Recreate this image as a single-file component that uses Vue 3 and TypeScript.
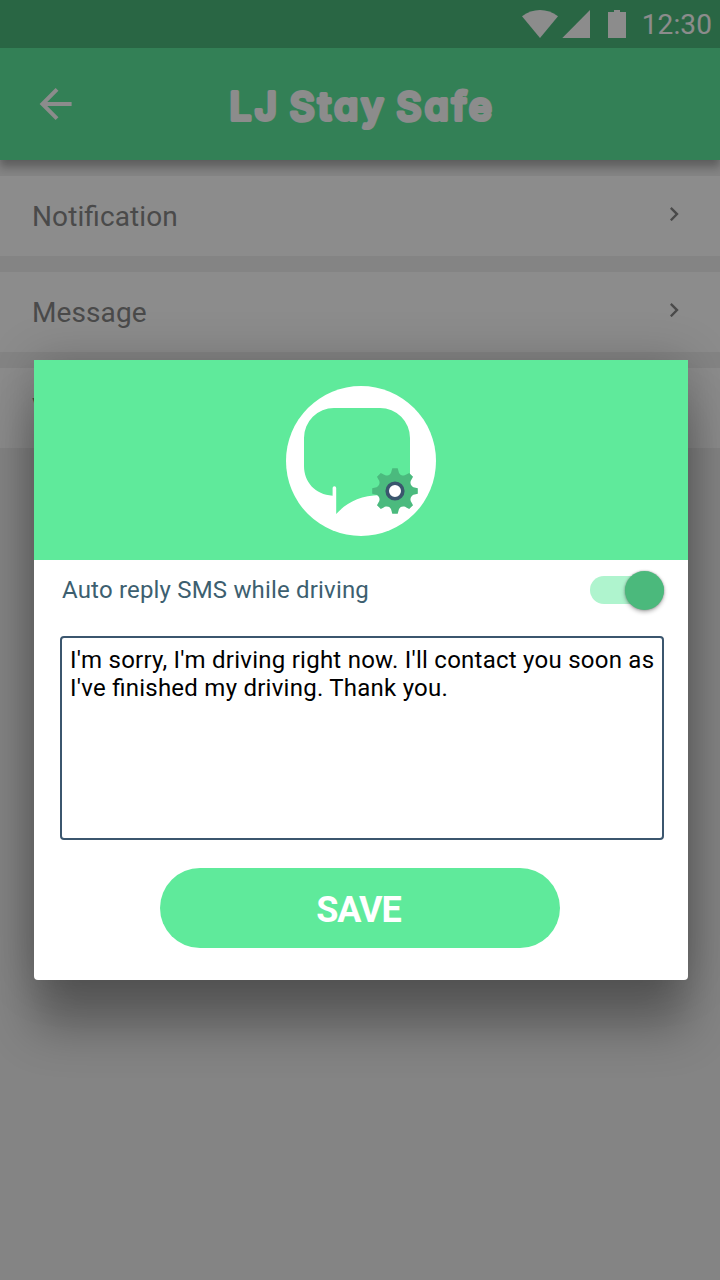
<script setup lang="ts">
import { ref } from 'vue'

const rows = ref<string[]>(['Notification', 'Message', 'V'])
const autoReply = ref(true)
const message = ref("I'm sorry, I'm driving right now. I'll contact you soon as I've finished my driving. Thank you.")

// Eight-toothed gear centred on (cx, cy)
function gearPath(cx: number, cy: number): string {
  const teeth = 8
  const at = (angle: number, along: number, across: number) => {
    const x = cx + Math.cos(angle) * along - Math.sin(angle) * across
    const y = cy + Math.sin(angle) * along + Math.cos(angle) * across
    return `${x.toFixed(2)} ${y.toFixed(2)}`
  }
  let d = ''
  for (let i = 0; i < teeth; i++) {
    const a = (i * Math.PI * 2) / teeth
    const next = ((i + 1) * Math.PI * 2) / teeth
    d += `${i === 0 ? 'M' : 'L'}${at(a, 19.6, -3.6)}L${at(a, 22.8, -2.7)}L${at(a, 22.8, 2.7)}L${at(a, 19.6, 3.6)}`
    d += `A4.9 4.9 0 0 0 ${at(next, 19.6, -3.6)}`
  }
  return d + 'Z'
}
const gear = gearPath(109, 105)
</script>

<template>
  <div class="screen">
    <div class="top">
      <div class="status">
        <svg class="signals" width="104" height="28" viewBox="0 0 104 28">
          <path d="M0 6.2C11-2 25-2 36 6.2L18 28Z" />
          <path d="M68 0V28H40.3Z" />
          <path d="M92 0h6v2h6v26H86V2h6Z" />
        </svg>
        <span class="clock">12:30</span>
      </div>
      <header class="bar">
        <svg class="back" width="48" height="48" viewBox="0.2 0 24 24">
          <path d="M20 11H7.83l5.59-5.59L12 4l-8 8 8 8 1.41-1.41L7.83 13H20z" />
        </svg>
        <svg class="title" width="280" height="64" viewBox="0 0 280 64">
          <text x="9.500" y="47.500" textLength="262" lengthAdjust="spacing">LJ Stay Safe</text>
        </svg>
      </header>
    </div>
    <main class="list">
      <div v-for="row in rows" :key="row" class="row">
        <span>{{ row }}</span>
        <svg width="10" height="14" viewBox="0 0 10 14"><path d="M.8 .9L7 7.100L.8 13.300" /></svg>
      </div>
    </main>
    <div class="overlay">
      <section class="dialog">
        <div class="hero">
          <svg width="150" height="150" viewBox="0 0 150 150">
            <circle cx="75" cy="75" r="75" fill="#fff" />
            <path d="M48 22H94A30 30 0 0 1 124 52V109H94C74 109.500 60 117 50.200 128V102A1.800 1.800 0 0 0 46.600 102V109.700C29 108.500 18 96 18 80V52A30 30 0 0 1 48 22Z" fill="#5fea9b" />
            <path :d="gear" fill="#4bba7e" />
            <circle cx="109" cy="105" r="7.800" fill="#fff" stroke="#3b566e" stroke-width="3.600" />
          </svg>
        </div>
        <div class="body">
          <div class="option">
            <span>Auto reply SMS while driving</span>
            <button class="switch" :class="{ on: autoReply }" role="switch" :aria-checked="autoReply" aria-label="Auto reply" @click="autoReply = !autoReply">
              <span class="thumb"></span>
            </button>
          </div>
          <textarea v-model="message" class="message" spellcheck="false"></textarea>
          <button class="save">SAVE</button>
        </div>
      </section>
    </div>
  </div>
</template>

<style>
body {
  margin: 0;
}
</style>

<style scoped>
.screen {
  position: relative;
  width: 720px;
  height: 1280px;
  overflow: hidden;
  background: #f0f0f0;
  font-family: Roboto, "Liberation Sans", sans-serif;
}
.top {
  height: 160px;
  background: #5eea9d;
  box-shadow: 0 0 8px rgba(0, 0, 0, 0.12), 0 8px 8px rgba(0, 0, 0, 0.24);
}
.status {
  display: flex;
  justify-content: flex-end;
  align-items: center;
  gap: 15px;
  height: 48px;
  padding-right: 8px;
  box-sizing: border-box;
  background: rgba(0, 0, 0, 0.2);
  color: #fff;
}
.signals {
  fill: #fff;
}
.clock {
  width: 71px;
  padding-top: 2px;
  text-align: right;
  font-size: 28px;
  line-height: 48px;
  letter-spacing: 0.1px;
}
.bar {
  display: grid;
  grid-template-columns: 48px 280px 48px;
  justify-content: space-between;
  align-items: center;
  height: 112px;
  padding: 0 32px;
}
.back {
  fill: #fff;
}
.title text {
  font-family: Inter, sans-serif;
  font-size: 38.5px;
  font-weight: 500;
  font-feature-settings: "cv11";
  word-spacing: -4px;
  fill: #fff;
  stroke: #fff;
  stroke-width: 4px;
  stroke-linejoin: round;
}
.list {
  display: flex;
  flex-direction: column;
  gap: 16px;
  padding-top: 16px;
}
.row {
  display: flex;
  align-items: center;
  justify-content: space-between;
  height: 80px;
  padding: 0 40px 0 32px;
  background: #fff;
  color: #888;
  font-size: 28px;
  letter-spacing: 0.1px;
  font-feature-settings: "liga" 1;
}
.row svg {
  margin-bottom: 4px;
  fill: none;
  stroke: #888;
  stroke-width: 2.4;
}
.overlay {
  position: absolute;
  inset: 0;
  padding: 360px 32px 0 34px;
  background: rgba(0, 0, 0, 0.45);
}
.dialog {
  height: 620px;
  border-radius: 0 0 4px 4px;
  background: #fff;
  box-shadow: 0 0 48px rgba(0, 0, 0, 0.22), 0 48px 48px rgba(0, 0, 0, 0.3);
}
.hero {
  display: flex;
  justify-content: center;
  height: 200px;
  padding-top: 26px;
  box-sizing: border-box;
  background: #5fea9b;
}
.body {
  display: flex;
  flex-direction: column;
  padding: 0 24px 0 26px;
}
.option {
  display: flex;
  align-items: center;
  justify-content: space-between;
  height: 60px;
  padding-left: 2px;
  color: #3d5f70;
  font-size: 24px;
  letter-spacing: 0.18px;
}
.switch {
  display: flex;
  align-items: center;
  width: 74px;
  height: 28px;
  padding: 0;
  border: 0;
  border-radius: 14px;
  background: #d5d5d5;
}
.switch.on {
  justify-content: flex-end;
  background: #aff4ce;
}
.thumb {
  width: 39px;
  height: 39px;
  margin-right: 0.5px;
  border-radius: 50%;
  background: #4bb97c;
  box-shadow: 0 0 2px rgba(0, 0, 0, 0.3), 0 2px 4px rgba(0, 0, 0, 0.3);
}
.message {
  height: 204px;
  margin: 16px 0 28px;
  padding: 8px 0 0 8px;
  box-sizing: border-box;
  border: 2px solid #3b566e;
  border-radius: 4px;
  outline: 0;
  resize: none;
  overflow: hidden;
  background: #fff;
  color: #000;
  font: 24px/28px Roboto, "Liberation Sans", sans-serif;
  letter-spacing: 0.25px;
  font-feature-settings: "liga" 1;
}
.save {
  align-self: center;
  width: 400px;
  height: 80px;
  margin-right: 4px;
  padding: 3px 3px 0 0;
  border: 0;
  border-radius: 40px;
  background: #5fea9b;
  color: #fff;
  font: 700 36px/42px Roboto, "Liberation Sans", sans-serif;
  letter-spacing: -1px;
}
</style>
